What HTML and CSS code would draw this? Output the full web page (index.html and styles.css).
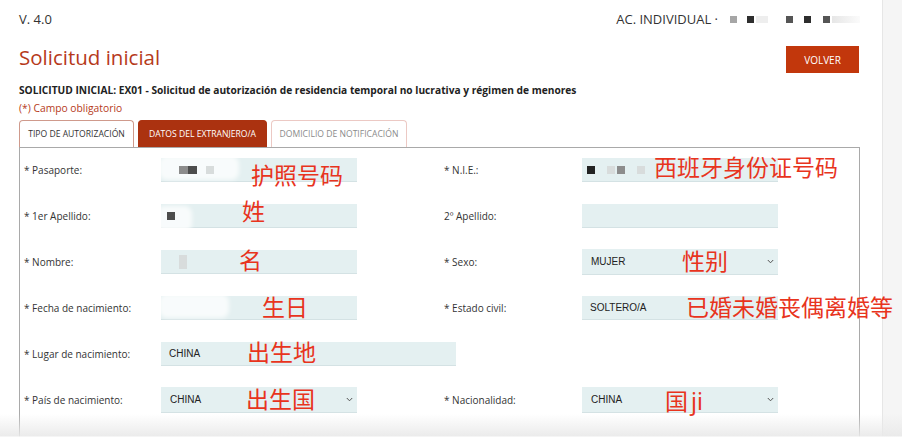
FILE: index.html
```html
<!DOCTYPE html>
<html lang="es">
<head>
<meta charset="utf-8">
<title>Solicitud inicial</title>
<link rel="stylesheet" href="styles.css">
</head>
<body>
<div class="page">
  <main class="content">
    <div class="topbar">
      <span class="version">V. 4.0</span>
      <span class="user">AC. INDIVIDUAL ·
        <span class="redact">
          <i class="px g1"></i><i class="px g2 m10"></i><i class="px fade"></i><i class="px g3 m18"></i><i class="px g2 m11"></i><i class="px g3 m12"></i><i class="px fade wide"></i>
        </span>
      </span>
    </div>

    <div class="titlebar">
      <h1 class="title">Solicitud inicial</h1>
      <button class="btn-back" type="button">VOLVER</button>
    </div>

    <p class="subtitle">SOLICITUD INICIAL: EX01 - Solicitud de autorización de residencia temporal no lucrativa y régimen de menores</p>
    <p class="required">(*) Campo obligatorio</p>

    <nav class="tabs">
      <span class="tab tab-outline">TIPO DE AUTORIZACIÓN</span>
      <span class="tab tab-active">DATOS DEL EXTRANJERO/A</span>
      <span class="tab tab-disabled">DOMICILIO DE NOTIFICACIÓN</span>
    </nav>

    <section class="panel">
      <div class="form-grid">
        <label class="label">* Pasaporte:</label>
        <div class="field input">
          <span class="blur b-pass"></span><span class="sq sq-mid s-p1"></span><span class="sq sq-dark s-p2"></span><span class="sq sq-light s-p3"></span>
          <span class="note n-pass">护照号码</span>
        </div>
        <label class="label">* N.I.E.:</label>
        <div class="field input">
          <span class="sq sq-black s-n1"></span><span class="sq sq-light s-n2"></span><span class="sq sq-mid s-n3"></span><span class="sq sq-light s-n4"></span>
          <span class="note n-nie">西班牙身份证号码</span>
        </div>

        <label class="label">* 1er Apellido:</label>
        <div class="field input">
          <span class="blur b-ap"></span><span class="sq sq-dark s-a1"></span>
          <span class="note n-ap">姓</span>
        </div>
        <label class="label">2º Apellido:</label>
        <div class="field input"></div>

        <label class="label">* Nombre:</label>
        <div class="field input">
          <span class="sq sq-light s-m1"></span>
          <span class="note n-nom">名</span>
        </div>
        <label class="label">* Sexo:</label>
        <div class="field select">
          <span class="value">MUJER</span>
          <svg class="chev" width="7" height="5" viewBox="0 0 7 5"><polyline points="0.8,1 3.5,3.8 6.2,1" fill="none" stroke="#555" stroke-width="1"/></svg>
          <span class="note n-sexo">性别</span>
        </div>

        <label class="label">* Fecha de nacimiento:</label>
        <div class="field input">
          <span class="blur b-fecha"></span>
          <span class="note n-fecha">生日</span>
        </div>
        <label class="label">* Estado civil:</label>
        <div class="field input">
          <span class="value">SOLTERO/A</span>
          <span class="note n-civil">已婚未婚丧偶离婚等</span>
        </div>

        <label class="label">* Lugar de nacimiento:</label>
        <div class="field input wide-field">
          <span class="value">CHINA</span>
          <span class="note n-lugar">出生地</span>
        </div>
        <span class="label"></span>
        <span></span>

        <label class="label">* País de nacimiento:</label>
        <div class="field select">
          <span class="value">CHINA</span>
          <svg class="chev" width="7" height="5" viewBox="0 0 7 5"><polyline points="0.8,1 3.5,3.8 6.2,1" fill="none" stroke="#555" stroke-width="1"/></svg>
          <span class="note n-pais">出生国</span>
        </div>
        <label class="label">* Nacionalidad:</label>
        <div class="field select">
          <span class="value">CHINA</span>
          <svg class="chev" width="7" height="5" viewBox="0 0 7 5"><polyline points="0.8,1 3.5,3.8 6.2,1" fill="none" stroke="#555" stroke-width="1"/></svg>
          <span class="note n-nac">国<span class="latin">ji</span></span>
        </div>
      </div>
    </section>
  </main>
  <aside class="strip"></aside>
</div>
<div class="bottom-fade"></div>
</body>
</html>
```
FILE: styles.css
```css
* { box-sizing: border-box; }

html, body {
  margin: 0;
  padding: 0;
  background: #fff;
  height: 100%;
  overflow: hidden;
}

body {
  font-family: "Open Sans", "DejaVu Sans", sans-serif;
  color: #333;
  position: relative;
}

.page {
  display: flex;
  min-height: 444px;
}

.content {
  width: 882px;
  padding: 10px 22px 0 19px;
}

.strip {
  width: 20px;
  background: #f5f5f5;
  border-left: 1px solid #e6e6e6;
}

/* top bar */
.topbar {
  display: flex;
  justify-content: space-between;
  align-items: center;
  height: 18px;
  font-size: 13px;
  line-height: 18px;
  color: #333;
}

.user {
  display: flex;
  align-items: center;
  gap: 4px;
}

.redact {
  display: flex;
  align-items: center;
  margin-left: 8px;
}

.px {
  display: block;
  width: 7px;
  height: 7px;
}
.px.g1 { background: #a6a6a6; }
.px.g2 { background: #2e2e2e; }
.px.g3 { background: #555; }
.px.m10 { margin-left: 10px; }
.px.m11 { margin-left: 11px; }
.px.m12 { margin-left: 12px; }
.px.m18 { margin-left: 18px; }
.px.fade { background: #eeeeee; width: 12px; margin-left: 2px; }
.px.fade.wide { width: 28px; background: linear-gradient(to right, #e6e6e6, #fbfbfb); }

/* title */
.titlebar {
  display: flex;
  justify-content: space-between;
  align-items: flex-start;
  margin-top: 15px;
  height: 30px;
}

.title {
  margin: 0;
  font-size: 20.5px;
  line-height: 28px;
  font-weight: 400;
  color: #b63a1b;
}

.btn-back {
  margin-top: 3px;
  width: 73px;
  height: 27px;
  border: none;
  background: #c2370c;
  color: #fff;
  font-family: "Open Sans", sans-serif;
  font-size: 10px;
  padding: 0;
  margin-right: 1px;
}

.subtitle {
  margin: 10px 0 0;
  font-size: 10.2px;
  line-height: 14px;
  font-weight: 700;
  color: #222;
}

.required {
  margin: 4px 0 0;
  font-size: 10.3px;
  line-height: 14px;
  color: #b63a1b;
}

/* tabs */
.tabs {
  display: flex;
  gap: 4px;
  margin-top: 5px;
  height: 27px;
}

.tab {
  display: flex;
  align-items: center;
  justify-content: center;
  height: 27px;
  font-size: 8.6px;
  border-radius: 4px 4px 0 0;
  border: 1px solid;
  border-bottom: none;
}

.tab-outline {
  width: 115px;
  border-color: #cf9a8c;
  color: #333;
  background: #fff;
}

.tab-active {
  width: 129px;
  border-color: #ab3210;
  background: #ab3210;
  color: #fff;
}

.tab-disabled {
  width: 136px;
  border-color: #ecc9c4;
  color: #8a8a8a;
  background: #fff;
}

/* panel */
.panel {
  border: 1px solid #a9a9a9;
  border-bottom: none;
  padding: 10px 0 40px 4px;
  min-height: 300px;
}

.form-grid {
  display: grid;
  grid-template-columns: 137px 283px 138px 196px;
  grid-auto-rows: 24px;
  row-gap: 22px;
  align-items: center;
}

.label {
  font-size: 10px;
  color: #333;
  white-space: nowrap;
}

.field {
  position: relative;
  width: 196px;
  background: #e4f0f1;
  border-bottom: 1px solid #d4e2e4;
  display: flex;
  align-items: center;
  font-family: "Liberation Sans", Arial, sans-serif;
  font-size: 10px;
  color: #222;
  padding: 0 4px 0 8px;
}

.field.input { height: 24px; }
.field.select { height: 26px; justify-content: space-between; padding-left: 9px; }
.field.wide-field { width: 295px; }

.chev { display: block; }

/* redaction marks */
.sq { position: absolute; top: 8px; width: 8px; height: 8px; }
.sq-black { background: #222; }
.sq-dark { background: #4d4d4d; }
.sq-mid { background: #8c8c8c; }
.sq-light { background: #d8dcdc; }
.blur { position: absolute; top: -2px; background: rgba(255,255,255,0.75); border-radius: 8px; filter: blur(2px); }
.b-pass { left: -2px; width: 80px; height: 24px; }
.b-ap { left: -4px; width: 35px; height: 26px; top: 2px; }
.b-fecha { left: -2px; width: 70px; height: 24px; }
.s-p1 { left: 18px; width: 9px; }
.s-p2 { left: 27px; width: 9px; }
.s-p3 { left: 45px; }
.s-n1 { left: 5px; }
.s-n2 { left: 25px; }
.s-n3 { left: 35px; }
.s-n4 { left: 55px; }
.s-a1 { left: 6px; }
.s-m1 { left: 18px; height: 14px; top: 5px; }

/* handwritten annotations over the form */
.note {
  position: absolute;
  font-family: "Noto Sans CJK SC", "Noto Sans", sans-serif;
  font-size: 23px;
  line-height: 1;
  color: #e8341d;
  white-space: nowrap;
  z-index: 2;
}
.note .latin { font-family: "Noto Sans", sans-serif; margin-left: 3px; }
.n-pass { left: 90px; top: 5px; }
.n-nie { left: 72px; top: -3px; }
.n-ap { left: 81px; top: -5px; }
.n-nom { left: 78px; top: -2px; }
.n-sexo { left: 100px; top: 0; }
.n-fecha { left: 101px; top: -1px; }
.n-civil { left: 104px; top: -1px; }
.n-lugar { left: 86px; top: -2px; }
.n-pais { left: 85px; top: 0; }
.n-nac { left: 83px; top: 2px; }

/* screen bottom fade */
.bottom-fade {
  position: absolute;
  left: 0;
  right: 0;
  bottom: 0;
  height: 30px;
  background: linear-gradient(to bottom, rgba(236,236,236,0) 0px, rgba(233,233,233,0.9) 22px, #fff 23px, #fff 30px);
  z-index: 3;
}
```
